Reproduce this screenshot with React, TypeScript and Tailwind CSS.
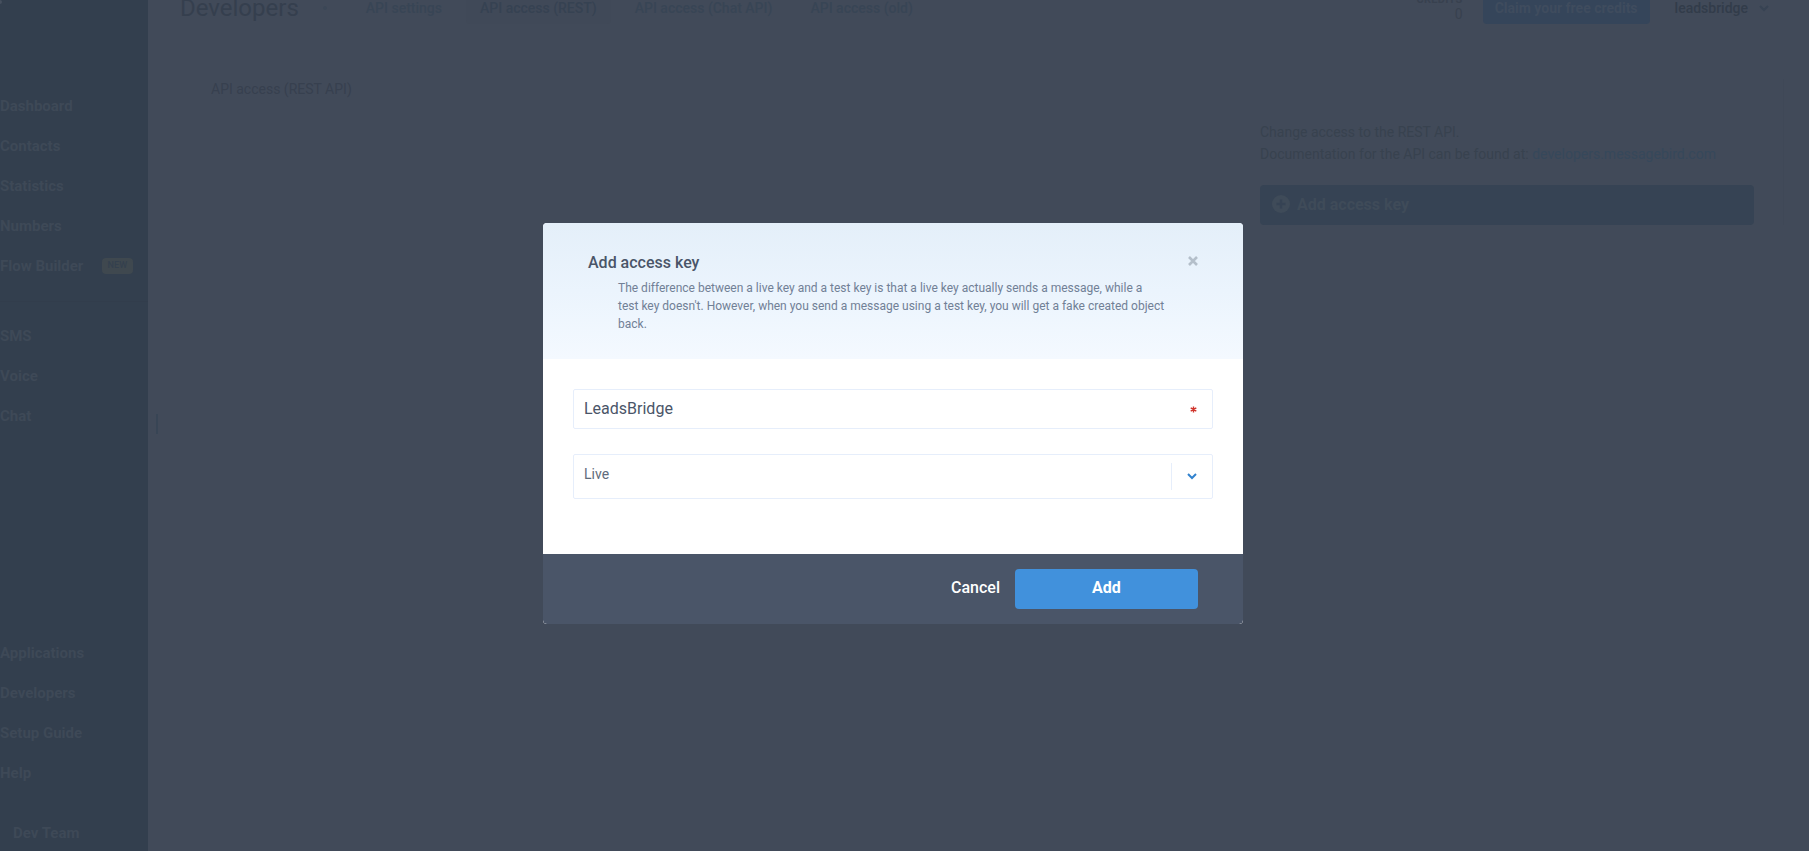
import { useState } from 'react'
import { clsx } from 'clsx'

interface NavItem {
  label: string
  badge?: string
}

const mainNav: NavItem[] = [
  { label: 'Dashboard' },
  { label: 'Contacts' },
  { label: 'Statistics' },
  { label: 'Numbers' },
  { label: 'Flow Builder', badge: 'NEW' },
]

const channelNav: NavItem[] = [{ label: 'SMS' }, { label: 'Voice' }, { label: 'Chat' }]

const bottomNav: NavItem[] = [
  { label: 'Applications' },
  { label: 'Developers' },
  { label: 'Setup Guide' },
  { label: 'Help' },
]

const tabs = ['API settings', 'API access (REST)', 'API access (Chat API)', 'API access (old)']

function Chevron({ className }: { className: string }) {
  return (
    <svg viewBox="0 0 10 7" className={className} fill="none" stroke="currentColor" strokeWidth="2" aria-hidden="true">
      <path d="M1 1l4 4 4-4" />
    </svg>
  )
}

function NavList({ items }: { items: NavItem[] }) {
  return (
    <ul>
      {items.map(item => (
        <li key={item.label}>
          <a href="#" className="flex h-10 items-center justify-between pr-[15px]">
            {item.label}
            {item.badge && (
              <span className="flex h-4 w-[31px] items-center justify-center rounded bg-[#3f484f] text-[9px] font-medium tracking-wide text-[#34404e]">
                {item.badge}
              </span>
            )}
          </a>
        </li>
      ))}
    </ul>
  )
}

function Sidebar() {
  return (
    <aside className="flex w-[148px] shrink-0 flex-col bg-[#333f4e] text-[15px] font-bold text-[#3e4957]">
      <a href="#" aria-label="Home" className="h-[4px] w-[2px] rounded-r-full bg-[#46505e]" />
      <nav className="mt-[82px] flex flex-1 flex-col">
        <NavList items={mainNav} />
        <div className="mt-[15px] border-t border-[#323d4c] pt-[14px]">
          <NavList items={channelNav} />
        </div>
        <div className="mt-auto pt-10">
          <NavList items={bottomNav} />
        </div>
      </nav>
      <a href="#" className="mt-[22px] flex h-9 items-center pl-[13px]">
        Dev Team
      </a>
    </aside>
  )
}

function TopBar() {
  return (
    <header className="-mt-2 flex h-8 items-center pr-[40px] pl-[32px]">
      <h1 className="text-2xl leading-8 text-[#353f4e]">Developers</h1>
      <span className="ml-[24px] h-[4px] w-[4px] rounded-full bg-[#3b4757]" />
      <nav className="ml-[25px] flex text-sm font-medium">
        {tabs.map((tab, index) => (
          <a
            key={tab}
            href="#"
            className={clsx(
              'mr-[10px] flex h-8 items-center rounded px-[14px]',
              index === 1 ? 'bg-[#404958] text-[#364252]' : 'text-[#384555]'
            )}
          >
            {tab}
          </a>
        ))}
      </nav>
      <div className="ml-auto flex items-center">
        <div className="text-right text-[#38414f]">
          <div className="text-[11px] leading-3 font-bold tracking-wide">CREDITS</div>
          <div className="text-sm leading-4">0</div>
        </div>
        <button className="ml-5 h-8 rounded bg-[#35455a] px-[12px] text-sm font-bold text-[#3f4c5e]">
          Claim your free credits
        </button>
        <button className="ml-[25px] flex items-center text-sm font-medium text-[#323c4a]">
          leadsbridge
          <Chevron className="ml-[11px] w-[10px] text-[#374353]" />
        </button>
      </div>
    </header>
  )
}

function AccessPanel() {
  return (
    <main className="flex justify-between pt-[55px] pr-[25px] pl-[63px]">
      <h2 className="text-sm leading-5 text-[#37404f]">API access (REST API)</h2>
      <section className="w-[524px] border-r border-[#3f4857] pt-[42px] pr-[29px] text-sm leading-[22px] text-[#38424f]">
        <p>
          Change access to the REST API.
          <br />
          Documentation for the API can be found at:{' '}
          <a href="#" className="text-[#36485b]">
            developers.messagebird.com
          </a>
        </p>
        <button className="mt-[20px] flex h-10 w-full items-center rounded bg-[#364354] px-[12px] text-base font-bold text-[#3f4b59]">
          <svg viewBox="0 0 18 18" className="mr-[7px] mb-[3px] w-[18px]" aria-hidden="true">
            <circle cx="9" cy="9" r="9" fill="currentColor" />
            <path d="M9 4.5v9M4.5 9h9" stroke="#364354" strokeWidth="2.4" />
          </svg>
          Add access key
        </button>
      </section>
    </main>
  )
}

function AddKeyDialog() {
  const [name, setName] = useState('LeadsBridge')
  const [mode, setMode] = useState('live')

  return (
    <div className="fixed inset-0 z-10 flex items-center justify-center pr-[23px] pb-[4px]">
      <form
        role="dialog"
        aria-labelledby="dialog-title"
        onSubmit={e => e.preventDefault()}
        className="w-full max-w-[700px] overflow-hidden rounded bg-white"
      >
        <div className="bg-linear-to-b from-[#e4eff9] via-[#ebf4fd] to-[#f4f9ff] px-[45px] pt-[28px] pb-[26px]">
          <div className="flex items-center justify-between">
            <h2 id="dialog-title" className="text-base leading-6 font-medium text-[#4a5568]">
              Add access key
            </h2>
            <button type="button" aria-label="Close" className="pb-1 text-[#b4bfca]">
              <svg viewBox="0 0 10 10" className="w-[10px]" fill="none" stroke="currentColor" strokeWidth="2.6" aria-hidden="true">
                <path d="M1 1l8 8M9 1l-8 8" />
              </svg>
            </button>
          </div>
          <p className="mx-[30px] mt-1 text-xs leading-[18px] text-[#718096]">
            The difference between a live key and a test key is that a live key actually sends a message, while a
            <br />
            test key doesn't. However, when you send a message using a test key, you will get a fake created object
            back.
          </p>
        </div>

        <div className="px-[30px] pt-[30px] pb-[55px]">
          <div className="relative">
            <input
              type="text"
              required
              aria-label="Key name"
              value={name}
              onChange={e => setName(e.target.value)}
              className="block h-10 w-full rounded-xs border border-[#e6eefb] bg-white pr-10 pb-[2px] pl-[10px] text-base text-[#4a5568] outline-none"
            />
            <svg
              viewBox="0 0 8 8"
              className="absolute top-[17px] right-4 w-[7px] text-[#d0342c]"
              stroke="currentColor"
              strokeWidth="1.6"
              aria-hidden="true"
            >
              <path d="M4 .5v7M.8 2.200l6.400 3.600M7.200 2.200L.8 5.800" />
            </svg>
          </div>

          <div className="relative mt-[25px]">
            <select
              aria-label="Key type"
              value={mode}
              onChange={e => setMode(e.target.value)}
              className="block h-[45px] w-full appearance-none rounded-xs border border-[#e6eefb] bg-white pb-[6px] pl-[10px] text-sm text-[#606b7b] outline-none"
            >
              <option value="live">Live</option>
              <option value="test">Test</option>
            </select>
            <div className="pointer-events-none absolute inset-y-[9px] right-4 flex items-center border-l border-[#e6eefb] pl-[15px]">
              <Chevron className="w-[10px] text-[#3182ce]" />
            </div>
          </div>
        </div>

        <div className="flex items-center justify-end gap-[15px] rounded-b bg-[#4a5568] px-[45px] py-[15px] text-base text-white">
          <button type="button" className="h-10 pb-[2px] font-medium">
            Cancel
          </button>
          <button type="submit" className="h-10 w-[183px] rounded bg-[#4191dc] pb-[2px] font-bold">
            Add
          </button>
        </div>
      </form>
    </div>
  )
}

export default function App() {
  return (
    <div className="flex min-h-screen overflow-hidden bg-[#414a59] font-['Roboto','Liberation_Sans',sans-serif]">
      <Sidebar />
      {/* Drag handle for the side panel */}
      <div className="mb-1 ml-2 h-5 w-[2px] shrink-0 self-center bg-[#384555]" />
      <div className="-ml-[10px] min-w-0 flex-1">
        <TopBar />
        <AccessPanel />
      </div>
      <AddKeyDialog />
    </div>
  )
}
